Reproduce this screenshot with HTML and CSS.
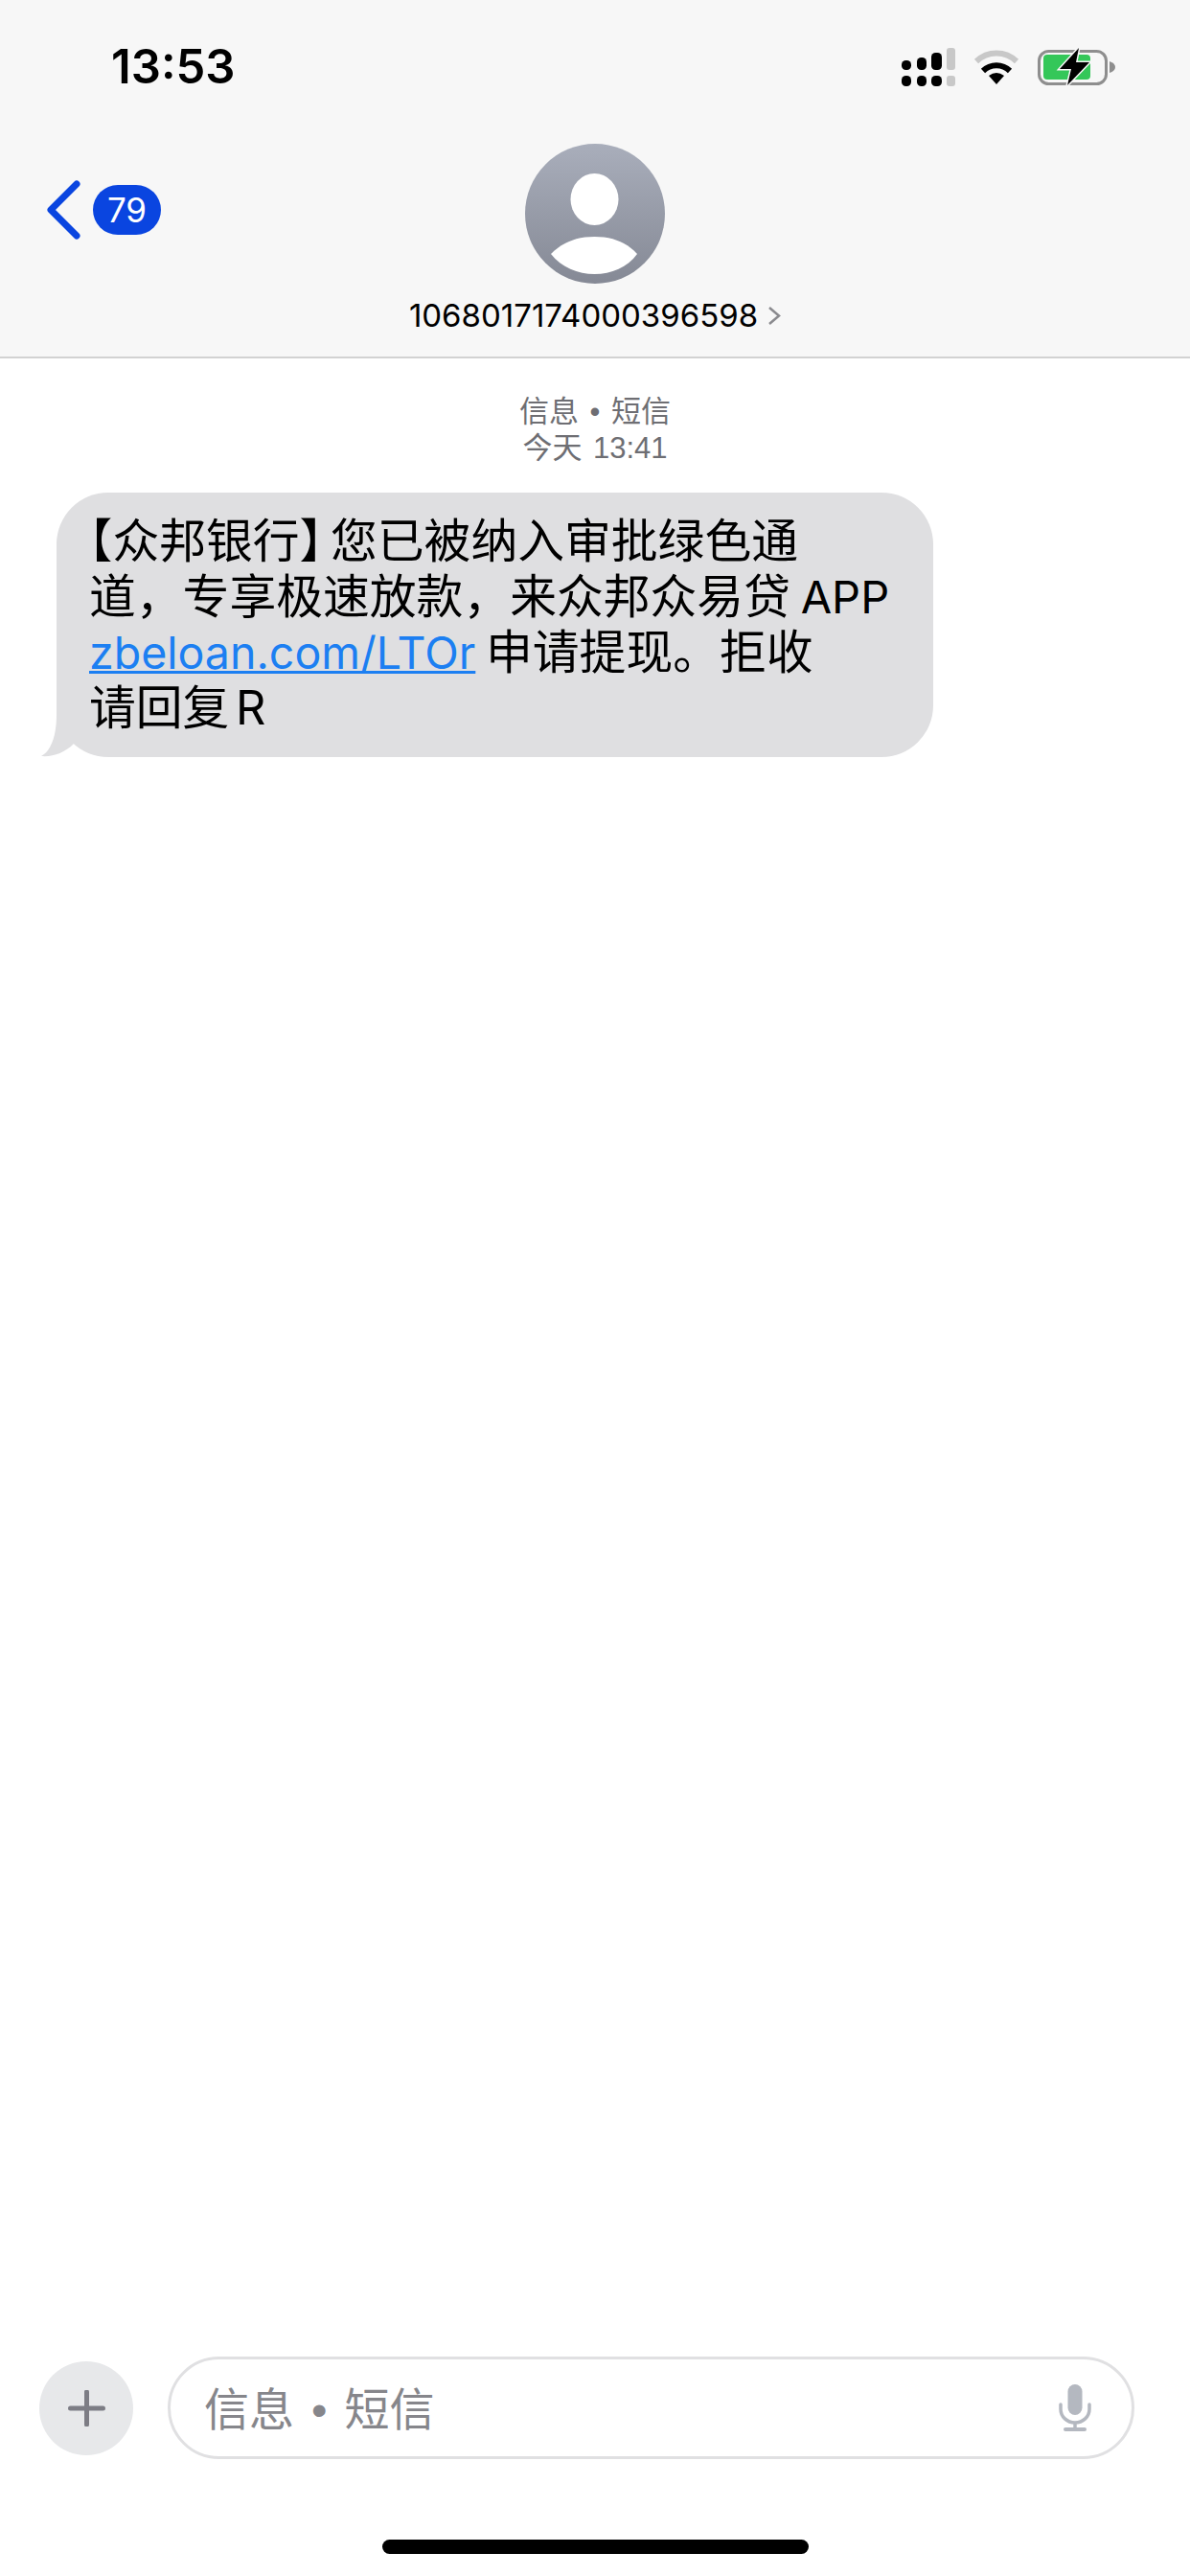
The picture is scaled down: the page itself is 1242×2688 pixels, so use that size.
FILE: index.html
```html
<!DOCTYPE html>
<html lang="zh-CN">
<head>
  <meta charset="UTF-8">
  <meta name="viewport" content="width=device-width, initial-scale=1.0">
  <title>信息</title>
  <link rel="stylesheet" href="styles.css">
</head>
<body>
  <div class="page">
    <header class="header">
      <!-- status bar -->
      <div class="status-bar">
        <span class="time">13:53</span>
        <div class="status-icons">
          <svg width="56" height="40" viewBox="0 0 56 40">
            <rect x="0" y="13" width="10" height="10" rx="4.5" fill="#000"/>
            <rect x="16" y="10" width="10" height="13" rx="4.5" fill="#000"/>
            <rect x="31" y="5" width="11" height="18" rx="4.5" fill="#000"/>
            <rect x="47" y="0" width="9" height="23" rx="3" fill="#c8c8c8"/>
            <rect x="0" y="29" width="10" height="11" rx="4.5" fill="#000"/>
            <rect x="16" y="29" width="10" height="11" rx="4.5" fill="#000"/>
            <rect x="31" y="29" width="11" height="11" rx="4.5" fill="#000"/>
            <rect x="47" y="29" width="9" height="11" rx="3" fill="#c8c8c8"/>
          </svg>
          <svg width="48" height="40" viewBox="0 0 48 40">
            <path d="M3 14A30 30 0 0 1 45 14" fill="none" stroke="#c8c8c8" stroke-width="6"/>
            <path d="M10 24A20 20 0 0 1 38 24" fill="none" stroke="#000" stroke-width="6"/>
            <path d="M24 38L16 29Q24 23 32 29Z" fill="#000"/>
          </svg>
          <svg width="81" height="40" viewBox="0 0 81 40">
            <rect x="1.5" y="3.5" width="70" height="34" rx="10" fill="none" stroke="#8e8e8e" stroke-width="3"/>
            <rect x="6" y="7" width="49" height="26" rx="4" fill="#34c759"/>
            <path d="M75 14Q81 16 81 20Q81 24 75 26Z" fill="#8e8e8e"/>
            <path d="M43 0L23 22H35L31 39L54 15H40Z" fill="#000" stroke="#f7f7f7" stroke-width="3" paint-order="stroke"/>
          </svg>
        </div>
      </div>

      <!-- back button and contact -->
      <div class="nav">
        <div class="back">
          <svg width="36" height="62" viewBox="0 0 36 62">
            <path d="M31 4L4 31L31 58" fill="none" stroke="#0a45e0" stroke-width="7" stroke-linecap="round" stroke-linejoin="round"/>
          </svg>
          <span class="badge">79</span>
        </div>
        <div class="contact">
          <svg width="146" height="146" viewBox="0 0 146 146">
            <defs>
              <linearGradient id="avatar-bg" x1="0" y1="0" x2="0" y2="1">
                <stop offset="0" stop-color="#a9aebb"/>
                <stop offset="1" stop-color="#858995"/>
              </linearGradient>
            </defs>
            <circle cx="73" cy="73" r="73" fill="url(#avatar-bg)"/>
            <ellipse cx="72.5" cy="58" rx="25" ry="27" fill="#fff"/>
            <path d="M27 115C38 104 52 97 72.5 97C93 97 107 104 117 115C107 129 90 136 72.5 136C55 136 38 129 27 115Z" fill="#fff"/>
          </svg>
          <div class="contact-name">
            <span>1068017174000396598</span>
            <svg width="14" height="21" viewBox="0 0 14 21">
              <path d="M2 2L12 10.5L2 19" fill="none" stroke="#8a8a8e" stroke-width="2.5"/>
            </svg>
          </div>
        </div>
      </div>
    </header>

    <main class="thread">
      <div class="meta">信息 • 短信<br>今天 13:41</div>
      <div class="bubble">
        <svg class="bubble-tail" width="34" height="54" viewBox="0 0 34 54">
          <path d="M16 0V10C16 32 10 48 0 53C12 54 24 50 34 40V0Z" fill="#dfdfe1"/>
        </svg>
        <span class="bracket">【</span>众邦银行<span class="bracket bracket-close">】</span>您已被纳入审批绿色通<br>
        道，专享极速放款，来众邦众易贷 <span class="latin">APP</span><br>
        <a class="link" href="#">zbeloan.com/LTOr</a> 申请提现。拒收<br>
        <span class="tight">请回复 R</span>
      </div>
    </main>

    <!-- message input -->
    <div class="composer">
      <button class="add-button">
        <svg width="39" height="38" viewBox="0 0 39 38">
          <path d="M19.5 2V36M2.5 19H36.5" fill="none" stroke="#7d7d85" stroke-width="5" stroke-linecap="round"/>
        </svg>
      </button>
      <div class="input">
        <span class="placeholder">信息 • 短信</span>
        <svg width="34" height="49" viewBox="0 0 34 49">
          <rect x="9.5" y="0" width="15" height="32" rx="7.5" fill="#b4b8c0"/>
          <path d="M2 21V26A15 14 0 0 0 32 26V21" fill="none" stroke="#b4b8c0" stroke-width="3.5" stroke-linecap="round"/>
          <path d="M17 40V47" fill="none" stroke="#b4b8c0" stroke-width="3.5"/>
          <path d="M7 47H27" fill="none" stroke="#b4b8c0" stroke-width="4" stroke-linecap="round"/>
        </svg>
      </div>
    </div>
    <div class="home-bar"></div>
  </div>
</body>
</html>
```

FILE: styles.css
```css
body {
  font-family: 'Inter', 'Noto Sans CJK SC', sans-serif;
  margin: 0;
  padding: 0;
  background-color: #fff;
  color: #000;
}
.page {
  display: flex;
  flex-direction: column;
  height: 2688px;
  overflow: hidden;
}
.header {
  background-color: #f7f7f7;
  border-bottom: 2px solid #d2d2d2;
  padding-bottom: 23px;
}
.status-bar {
  display: flex;
  justify-content: space-between;
  align-items: center;
  height: 60px;
  padding: 40px 78px 50px 116px;
}
.time {
  font-size: 49px;
  font-weight: 600;
  line-height: 60px;
}
.status-icons {
  display: flex;
  align-items: center;
  gap: 19px;
}
.nav {
  display: grid;
  grid-template-columns: 1fr auto 1fr;
}
.back {
  display: flex;
  align-items: center;
  align-self: start;
  gap: 12px;
  margin: 38px 0 0 49px;
}
.badge {
  width: 71px;
  height: 52px;
  border-radius: 26px;
  background-color: #0a45e0;
  color: #fff;
  font-size: 35px;
  line-height: 52px;
  text-align: center;
}
.contact {
  display: flex;
  flex-direction: column;
  align-items: center;
  gap: 13px;
}
.contact-name {
  display: flex;
  align-items: center;
  gap: 10px;
  font-size: 33px;
  line-height: 40px;
}
.thread {
  flex: 1;
  padding: 37px 0 0 59px;
}
.meta {
  margin-left: -59px;
  font-family: 'Liberation Sans', 'Noto Sans CJK SC', sans-serif;
  font-size: 31px;
  line-height: 38px;
  word-spacing: 3px;
  text-align: center;
  color: #6e6e73;
}
.bubble {
  position: relative;
  width: 915px;
  box-sizing: border-box;
  margin-top: 27px;
  padding: 22px 0 22px 34px;
  background-color: #dfdfe1;
  border-radius: 54px;
  font-size: 48.8px;
  line-height: 58px;
}
.bubble-tail {
  position: absolute;
  left: -16px;
  bottom: 0;
}
.bracket {
  font-feature-settings: 'halt';
}
.bracket-close {
  margin-right: 8px;
}
.latin {
  margin-left: -3px;
  font-size: 47px;
}
.link {
  margin-right: -3px;
  color: #1c7ff2;
  font-size: 46.5px;
  text-decoration: underline;
  text-decoration-thickness: 3px;
}
.tight {
  word-spacing: -7px;
}
.composer {
  display: flex;
  align-items: center;
  gap: 36px;
  padding-left: 41px;
}
.add-button {
  display: flex;
  align-items: center;
  justify-content: center;
  width: 98px;
  height: 98px;
  padding: 0;
  border: none;
  border-radius: 50%;
  background-color: #e7e8ea;
}
.input {
  display: flex;
  align-items: center;
  justify-content: space-between;
  width: 1009px;
  height: 107px;
  box-sizing: border-box;
  padding: 0 42px 0 35px;
  border: 3px solid #e0e0e2;
  border-radius: 54px;
}
.placeholder {
  padding-bottom: 5px;
  font-family: 'Liberation Sans', 'Noto Sans CJK SC', sans-serif;
  font-size: 47px;
  word-spacing: 5px;
  color: #86868b;
}
.home-bar {
  width: 445px;
  height: 15px;
  margin: 84px auto 23px;
  border-radius: 8px;
  background-color: #000;
}
```
